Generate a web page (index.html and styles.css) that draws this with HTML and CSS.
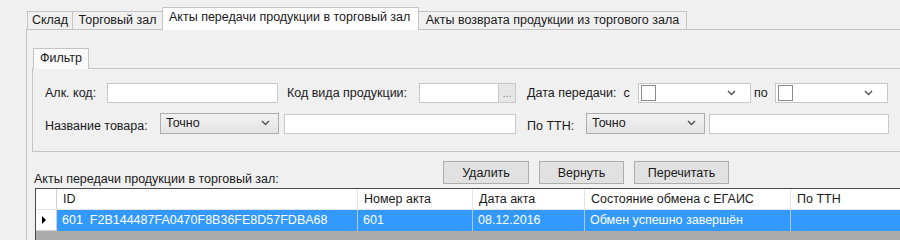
FILE: index.html
```html
<!DOCTYPE html>
<html lang="ru">
<head>
  <meta charset="UTF-8">
  <title>Акты передачи продукции</title>
  <link rel="stylesheet" href="styles.css">
</head>
<body>
  <div class="tabs">
    <div class="tab tab-sklad">Склад</div>
    <div class="tab tab-zal">Торговый зал</div>
    <div class="tab tab-active">Акты передачи продукции в торговый зал</div>
    <div class="tab tab-return">Акты возврата продукции из торгового зала</div>
  </div>

  <div class="page">
    <div class="filter-tab">Фильтр</div>
    <div class="filter">
      <div class="row">
        <span class="label w-alk">Алк. код:</span>
        <input class="field w-alk-input" type="text">
        <span class="label w-kod">Код вида продукции:</span>
        <div class="field w-kod-input lookup"><span class="dots">...</span></div>
        <span class="label w-date">Дата передачи:&nbsp; с</span>
        <div class="field date">
          <span class="check"></span>
          <svg class="chev" width="9" height="6" viewBox="0 0 9 6"><path d="M1 1l3.5 3.5L8 1" fill="none" stroke="#555" stroke-width="1.5"/></svg>
        </div>
        <span class="label w-po">по</span>
        <div class="field date">
          <span class="check"></span>
          <svg class="chev" width="9" height="6" viewBox="0 0 9 6"><path d="M1 1l3.5 3.5L8 1" fill="none" stroke="#555" stroke-width="1.5"/></svg>
        </div>
      </div>
      <div class="row row-second">
        <span class="label low w-name">Название товара:</span>
        <div class="select">
          <span>Точно</span>
          <svg class="chev" width="9" height="6" viewBox="0 0 9 6"><path d="M1 1l3.5 3.5L8 1" fill="none" stroke="#555" stroke-width="1.5"/></svg>
        </div>
        <input class="field w-name-input" type="text">
        <span class="label low w-ttn">По ТТН:</span>
        <div class="select">
          <span>Точно</span>
          <svg class="chev" width="9" height="6" viewBox="0 0 9 6"><path d="M1 1l3.5 3.5L8 1" fill="none" stroke="#555" stroke-width="1.5"/></svg>
        </div>
        <input class="field w-ttn-input" type="text">
      </div>
    </div>

    <div class="toolbar">
      <span class="grid-title">Акты передачи продукции в торговый зал:</span>
      <button class="btn w-del">Удалить</button>
      <button class="btn w-back">Вернуть</button>
      <button class="btn w-reload">Перечитать</button>
    </div>

    <div class="grid">
      <div class="cell head rh"></div>
      <div class="cell head">ID</div>
      <div class="cell head">Номер акта</div>
      <div class="cell head">Дата акта</div>
      <div class="cell head">Состояние обмена с ЕГАИС</div>
      <div class="cell head">По ТТН</div>

      <div class="cell rh current"><span class="arrow"></span></div>
      <div class="cell sel">601&nbsp; F2B144487FA0470F8B36FE8D57FDBA68</div>
      <div class="cell sel">601</div>
      <div class="cell sel">08.12.2016</div>
      <div class="cell sel">Обмен успешно завершён</div>
      <div class="cell sel"></div>
    </div>
    <div class="grid-empty"></div>
  </div>
</body>
</html>
```

FILE: styles.css
```css
body {
  margin: 0;
  background: #f0f0f0;
  font-family: "Liberation Sans", Arial, sans-serif;
  font-size: 12.5px;
  color: #1a1a1a;
  height: 240px;
  overflow: hidden;
}
.tabs {
  display: flex;
  align-items: flex-end;
  margin: 7px 0 0 27px;
}
.tab {
  box-sizing: border-box;
  height: 18px;
  line-height: 17px;
  border: 1px solid #c4c4c4;
  border-bottom: none;
  background: #f0f0f0;
  text-align: center;
  margin-right: -1px;
  white-space: nowrap;
}
.tab-sklad { width: 46px; }
.tab-zal { width: 91px; }
.tab-active {
  position: relative;
  z-index: 1;
  width: 257px;
  height: 23px;
  line-height: 18px;
  margin-bottom: -1px;
  background: #fff;
  text-align: left;
  padding-left: 6px;
}
.tab-return { width: 269px; }

.page {
  margin-left: 26px;
  border-top: 1px solid #c4c4c4;
  border-left: 1px solid #c4c4c4;
  padding: 18px 0 0 5px;
}
.filter-tab {
  position: relative;
  z-index: 1;
  box-sizing: border-box;
  width: 56px;
  height: 21px;
  margin: 0 0 -1px 1px;
  border: 1px solid #c4c4c4;
  border-bottom: none;
  background: #fafafa;
  padding-left: 6px;
  line-height: 19px;
}
.filter {
  border-top: 1px solid #c4c4c4;
  border-left: 1px solid #c4c4c4;
  border-bottom: 1px solid #c4c4c4;
  padding: 14px 0 17px 12px;
}
.row {
  display: flex;
  align-items: center;
  height: 20px;
}
.row-second {
  margin-top: 10px;
  height: 21px;
}
.label {
  white-space: nowrap;
}
.low {
  align-self: flex-end;
  margin-bottom: 1px;
}
.w-alk { width: 62px; }
.w-kod { width: 132px; margin-left: 9px; }
.w-date { width: 111px; margin-left: 11px; }
.w-po { width: 21px; margin-left: 3px; }
.w-name { width: 115px; }
.w-ttn { width: 59px; margin-left: 11px; }

.field {
  box-sizing: border-box;
  height: 20px;
  border: 1px solid #c8c8c8;
  background: #fff;
  margin: 0;
  padding: 0;
  font: inherit;
}
.w-alk-input { width: 171px; }
.w-kod-input { width: 97px; }
.w-name-input { width: 232px; margin-left: 5px; }
.w-ttn-input { width: 180px; margin-left: 4px; }

.lookup {
  display: flex;
  justify-content: flex-end;
}
.dots {
  box-sizing: border-box;
  width: 17px;
  height: 18px;
  border-left: 1px solid #c8c8c8;
  background: #e6e6e6;
  color: #777;
  font-size: 10px;
  text-align: center;
  line-height: 20px;
}
.date {
  display: flex;
  align-items: center;
  justify-content: space-between;
  width: 113px;
  padding: 0 14px 0 2px;
}
.check {
  box-sizing: border-box;
  width: 15px;
  height: 16px;
  border: 1px solid #8a8a8a;
  background: #fff;
}
.select {
  box-sizing: border-box;
  display: flex;
  align-items: center;
  justify-content: space-between;
  width: 119px;
  height: 21px;
  border: 1px solid #adadad;
  background: linear-gradient(#f2f2f2, #e3e3e3);
  padding: 0 8px 1px 5px;
}
.chev {
  display: block;
}

.toolbar {
  display: flex;
  align-items: flex-end;
  margin-top: 9px;
  height: 23px;
}
.grid-title {
  width: 409px;
  margin: 0 0 -2px 2px;
}
.btn {
  box-sizing: border-box;
  height: 23px;
  margin: 0 10px 0 0;
  padding: 0;
  border: 1px solid #adadad;
  background: #e1e1e1;
  font: inherit;
  color: #1a1a1a;
}
.w-del { width: 86px; }
.w-back { width: 85px; }
.w-reload { width: 95px; }

.grid {
  display: grid;
  grid-template-columns: 21px 301px 115px 112px 206px 200px;
  grid-template-rows: 21px 21px;
  margin: 4px 0 0 3px;
  border-top: 1px solid #4a4a4a;
  border-left: 1px solid #4a4a4a;
}
.cell {
  box-sizing: border-box;
  padding-left: 6px;
  line-height: 21px;
  white-space: nowrap;
  border-right: 1px solid #e4e4e4;
}
.head {
  background: #fff;
  border-bottom: 1px solid #e4e4e4;
}
.rh {
  padding: 0;
  background: #fff;
  border-right: 1px solid #d0d0d0;
}
.current {
  display: flex;
  align-items: center;
  border-bottom: 1px solid #d0d0d0;
}
.arrow {
  width: 0;
  height: 0;
  margin-left: 6px;
  border-top: 4px solid transparent;
  border-bottom: 4px solid transparent;
  border-left: 4px solid #000;
}
.sel {
  background: #3399ff;
  color: #fff;
  padding-left: 5px;
  border-right: 1px solid #a9c9e8;
}
.grid-empty {
  margin-left: 3px;
  height: 20px;
  background: #ababab;
  border-left: 1px solid #4a4a4a;
}
```
